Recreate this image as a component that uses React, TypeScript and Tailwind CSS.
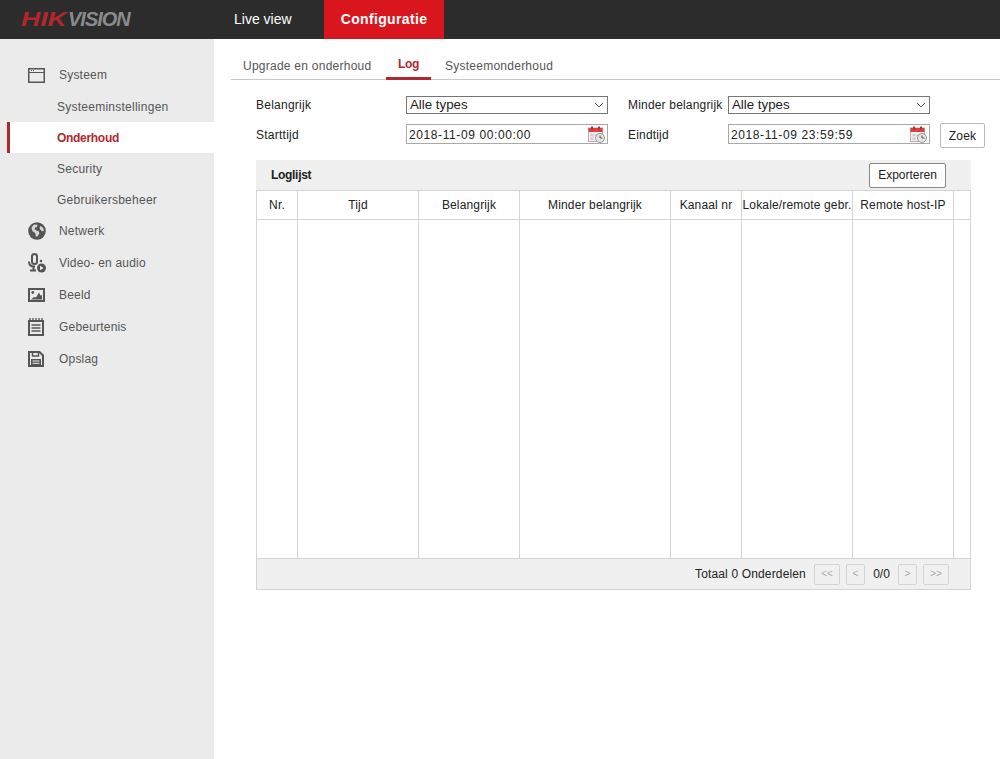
const font = { fontFamily: '"Liberation Sans", Arial, sans-serif' }

function WindowIcon() {
  return (
    <svg width="17" height="15" viewBox="0 0 17 15" fill="none">
      <rect x="0.750" y="0.750" width="15.500" height="13.500" stroke="#555" strokeWidth="1.500" />
      <path d="M1 4.500h15" stroke="#555" strokeWidth="1" />
      <path d="M3 2.600h4" stroke="#555" strokeWidth="1" strokeDasharray="1 1" />
    </svg>
  )
}

function GlobeIcon() {
  return (
    <svg width="18" height="18" viewBox="0 0 18 18">
      <circle cx="9" cy="9" r="8.800" fill="#555" />
      <path d="M3.500 5.500l2.500-3 3.500.2-.5 2.300-2 .5-.3 2 2.300 1.300 2 .7.300 2-2 3.200-1.500-.4-.5-3.300-2.500-1.500-1-2z" fill="#d8d8d8" />
      <path d="M12.500 4l2.500 1.800 1 3-2 .4-1.500-1.500-1-2z" fill="#d8d8d8" />
    </svg>
  )
}

function MicIcon() {
  return (
    <svg width="18" height="20" viewBox="0 0 18 20" fill="none">
      <rect x="4" y="1" width="5" height="10" rx="2.500" stroke="#555" strokeWidth="2" />
      <path d="M1 8.500c0 3.300 2 5 5 5h1M5.500 13.500v3M2 17.500h6" stroke="#555" strokeWidth="2" />
      <circle cx="13.500" cy="15" r="4.500" fill="#555" />
      <path d="M12 12.800l3.600 2.200-3.600 2.200z" fill="#ebebeb" />
      <circle cx="13" cy="8" r="1.300" fill="#555" />
    </svg>
  )
}

function ImageIcon() {
  return (
    <svg width="17" height="14" viewBox="0 0 17 14" fill="none">
      <rect x="1" y="1" width="15" height="12" stroke="#555" strokeWidth="2" />
      <path d="M3 11.500l3-2.500 2 .5 3-5 1.500 3 1.500-.5v4.500z" fill="#555" />
      <circle cx="4.800" cy="4.500" r="1.400" fill="#555" />
    </svg>
  )
}

function ListIcon() {
  return (
    <svg width="16" height="18" viewBox="0 0 16 18" fill="none">
      <rect x="1" y="3" width="14" height="14" stroke="#555" strokeWidth="2" />
      <path d="M2 0v3M5 0v3M8 0v3M11 0v3M14 0v3" stroke="#555" strokeWidth="1.300" />
      <path d="M3.500 7h9M3.500 10h9M3.500 13h9" stroke="#555" strokeWidth="1.500" />
    </svg>
  )
}

function SaveIcon() {
  return (
    <svg width="16" height="16" viewBox="0 0 16 16" fill="none">
      <path d="M1 1h10.500L15 4.500V15H1z" stroke="#555" strokeWidth="2" />
      <path d="M4.500 1v4h6V1" stroke="#555" strokeWidth="1.500" />
      <rect x="3" y="8" width="10" height="6.500" fill="#555" />
      <path d="M4.500 10h7M4.500 12.300h7" stroke="#ebebeb" strokeWidth="1" />
    </svg>
  )
}

function CalendarIcon() {
  return (
    <svg width="17" height="17" viewBox="0 0 17 17">
      <rect x="0.500" y="2" width="14" height="13.500" fill="#f4eeee" stroke="#c9a4a4" />
      <rect x="0.500" y="2" width="14" height="4" fill="#d9423f" />
      <rect x="3" y="0.500" width="2" height="3" fill="#a33" />
      <rect x="10" y="0.500" width="2" height="3" fill="#a33" />
      <path d="M2.500 8h3v2.500h-3zM2.500 11.500h3V14h-3zM6.500 8h3v2.500h-3z" fill="#c7ced6" />
      <circle cx="12" cy="12" r="4.500" fill="#e4e4e4" stroke="#999" />
      <path d="M12 9.500V12h2.300" stroke="#555" fill="none" />
    </svg>
  )
}

function Chevron() {
  return (
    <svg width="10" height="6" viewBox="0 0 10 6" fill="none">
      <path d="M1 1l4 4 4-4" stroke="#555" strokeWidth="1" />
    </svg>
  )
}

function MainItem({ icon, label }: { icon: React.ReactNode; label: string }) {
  return (
    <div className="flex items-center h-8 pl-[28px]">
      <div className="w-[31px] flex items-center shrink-0">{icon}</div>
      <span className="text-xs tracking-[0.2px] text-[#555]">{label}</span>
    </div>
  )
}

function SubItem({ label, active }: { label: string; active?: boolean }) {
  if (active) {
    return (
      <div className="flex items-center h-[31px] ml-[7px] pl-[47px] bg-white border-l-[3px] border-[#b0282f]">
        <span className="text-xs font-bold tracking-[-0.3px] text-[#b0282f]">{label}</span>
      </div>
    )
  }
  return (
    <div className="flex items-center h-[31px] pl-[57px]">
      <span className="text-xs tracking-[0.25px] text-[#555]">{label}</span>
    </div>
  )
}

function SelectBox({ width }: { width: string }) {
  return (
    <div className={`${width} h-[18px] border border-[#767676] flex items-center justify-between pl-[3px] pr-[3px] text-[13.300px] text-[#222]`}>
      <span>Alle types</span>
      <Chevron />
    </div>
  )
}

function DateBox({ value }: { value: string }) {
  return (
    <div className="w-[202px] h-[20px] border border-[#a9a9a9] flex items-center justify-between pl-[2px] pr-[2px] text-xs text-[#222]">
      <span className="tracking-[0.6px] pt-[1px]">{value}</span>
      <CalendarIcon />
    </div>
  )
}

function PageBtn({ label, width }: { label: string; width: string }) {
  return (
    <div className={`${width} h-[21px] border border-[#d4d4d4] rounded-[2px] flex items-center justify-center text-[10px] text-[#aaa]`}>
      {label}
    </div>
  )
}

const columns = [
  { label: "Nr.", width: "w-[41px]" },
  { label: "Tijd", width: "w-[121px]" },
  { label: "Belangrijk", width: "w-[101px]" },
  { label: "Minder belangrijk", width: "w-[151px]" },
  { label: "Kanaal nr", width: "w-[71px]" },
  { label: "Lokale/remote gebr.", width: "w-[111px]" },
  { label: "Remote host-IP", width: "w-[101px]" },
  { label: "", width: "flex-1" },
]

export default function App() {
  return (
    <div className="w-[1000px] h-[759px] overflow-hidden flex flex-col bg-white" style={font}>
      <header className="h-[39px] bg-[#2c2c2c] flex shrink-0">
        <div className="w-[234px] pl-[21px] pb-[2px] flex items-center text-[20px] font-bold italic">
          <span className="inline-block w-[47px] origin-left scale-x-[1.33] text-[#b3262c]">HIK</span>
          <span className="tracking-[-1px] text-[#8a8b8e]">VISION</span>
        </div>
        <div className="w-[90px] pb-[2px] flex items-center text-sm text-white">Live view</div>
        <div className="w-[120px] pb-[2px] bg-[#d9161e] flex items-center justify-center text-sm font-bold tracking-[0.35px] text-white">Configuratie</div>
      </header>

      <div className="flex flex-1">
        <aside className="w-[214px] bg-[#ebebeb] pt-[20px] shrink-0">
          <MainItem icon={<WindowIcon />} label="Systeem" />
          <SubItem label="Systeeminstellingen" />
          <SubItem label="Onderhoud" active />
          <SubItem label="Security" />
          <SubItem label="Gebruikersbeheer" />
          <MainItem icon={<GlobeIcon />} label="Netwerk" />
          <MainItem icon={<MicIcon />} label="Video- en audio" />
          <MainItem icon={<ImageIcon />} label="Beeld" />
          <MainItem icon={<ListIcon />} label="Gebeurtenis" />
          <MainItem icon={<SaveIcon />} label="Opslag" />
        </aside>

        <main className="flex-1 pt-[9px]">
          <nav className="ml-[17px] h-[32px] border-b border-[#c8c8c8] flex text-xs tracking-[0.25px] text-[#555]">
            <div className="ml-[12px] w-[143px] pt-[10px]">Upgrade en onderhoud</div>
            <div className="w-[45px] h-[32px] border-b-[3px] border-[#b0282f] pt-[8px] text-center font-bold tracking-[-0.3px] text-[#b0282f]">Log</div>
            <div className="ml-[14px] pt-[10px]">Systeemonderhoud</div>
          </nav>

          <div className="ml-[42px] mt-[16px] flex">
            <div className="w-[150px] flex flex-col text-xs tracking-[0.25px] text-[#222]">
              <div className="h-[18px] flex items-center">Belangrijk</div>
              <div className="h-[20px] mt-[10px] flex items-center pt-[1px]">Starttijd</div>
            </div>
            <div className="w-[222px] flex flex-col">
              <SelectBox width="w-[202px]" />
              <div className="mt-[10px]"><DateBox value="2018-11-09 00:00:00" /></div>
            </div>
            <div className="w-[100px] flex flex-col text-xs tracking-[0.18px] text-[#222]">
              <div className="h-[18px] flex items-center">Minder belangrijk</div>
              <div className="h-[20px] mt-[10px] flex items-center pt-[1px]">Eindtijd</div>
            </div>
            <div className="w-[212px] flex flex-col">
              <SelectBox width="w-[202px]" />
              <div className="mt-[10px]"><DateBox value="2018-11-09 23:59:59" /></div>
            </div>
            <button className="w-[45px] h-[25px] mt-[27px] border border-[#bbb] rounded-[2px] text-xs tracking-[0.2px] text-[#222] bg-white">Zoek</button>
          </div>

          <section className="ml-[42px] mt-[12px] w-[715px]">
            <div className="h-[30px] bg-[#f0f0f0] flex items-center justify-between pl-[15px] pr-[25px]">
              <span className="text-xs font-bold tracking-[-0.3px] text-[#222]">Loglijst</span>
              <button className="w-[77px] h-[25px] border border-[#888] rounded-[2px] bg-white text-xs text-[#222]">Exporteren</button>
            </div>
            <div className="border border-t-0 border-[#d4d4d4]">
              <div className="flex h-[368px] border-t border-[#d4d4d4]">
                {columns.map((c, i) => (
                  <div key={i} className={`${c.width} ${i < columns.length - 1 ? "border-r border-[#d4d4d4]" : ""} flex flex-col`}>
                    <div className="h-[29px] border-b border-[#d4d4d4] flex items-center justify-center text-xs tracking-[0.15px] text-[#222] whitespace-nowrap">{c.label}</div>
                  </div>
                ))}
              </div>
              <div className="h-[31px] bg-[#f0f0f0] border-t border-[#d4d4d4] flex items-center pl-[438px] text-xs text-[#222]">
                <span className="w-[119px] tracking-[0.15px]">Totaal 0 Onderdelen</span>
                <PageBtn label="<<" width="w-[26px]" />
                <div className="ml-[6px]"><PageBtn label="<" width="w-[19px]" /></div>
                <span className="w-[33px] text-center">0/0</span>
                <PageBtn label=">" width="w-[19px]" />
                <div className="ml-[6px]"><PageBtn label=">>" width="w-[26px]" /></div>
              </div>
            </div>
          </section>
        </main>
      </div>
    </div>
  )
}
